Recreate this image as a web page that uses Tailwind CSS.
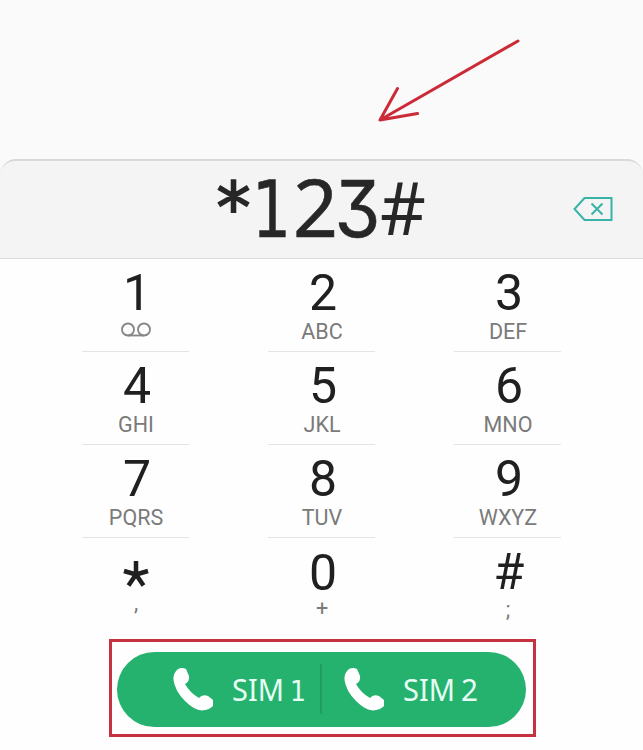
<!DOCTYPE html>
<html lang="en">
<head>
<meta charset="utf-8">
<title>Dialer</title>
<script src="https://cdn.jsdelivr.net/npm/@tailwindcss/browser@4"></script>
</head>
<body class="bg-[#fefefe]">
<main class="relative flex h-[750px] w-[643px] flex-col overflow-hidden bg-[#fefefe] font-['Roboto',sans-serif] text-[#202020]">
  <div class="bg-[#fafafa] pt-[159px]">
    <header class="flex h-[100px] items-center rounded-t-[16px] border-t-2 border-b border-t-[#d9d9d9] border-b-[#dcdcdc] bg-[#f4f4f4]">
      <svg class="ml-[210px] h-[97px] w-[220px] overflow-visible" viewBox="210 161 220 97" fill="#272727" stroke="#272727" stroke-width="0.6" aria-label="*123#">
        <text x="216.500" y="232" font-family="DejaVu Sans, sans-serif" font-size="70" stroke-width="1.800" textLength="34" lengthAdjust="spacingAndGlyphs">*</text>
        <text x="252" y="237" font-family="DejaVu Sans, sans-serif" font-size="79" textLength="39" lengthAdjust="spacingAndGlyphs">1</text>
        <text x="293" y="237" font-family="Noto Sans, sans-serif" font-size="80" textLength="45" lengthAdjust="spacingAndGlyphs">2</text>
        <text x="334.500" y="237" font-family="Inter, sans-serif" font-size="79" textLength="46" lengthAdjust="spacingAndGlyphs" style="font-feature-settings:'cv09' 1">3</text>
        <text x="380" y="235" font-family="Noto Sans, sans-serif" font-size="73" stroke="none" textLength="46" lengthAdjust="spacingAndGlyphs">#</text>
      </svg>
      <svg class="-mt-[2px] ml-[142px] h-[26px] w-[42px]" viewBox="0 0 42 26" fill="none" stroke="#38b3a7" stroke-width="2">
        <path d="M12.500 2H39.500V24H12.500L2.500 13Z"/><path d="M19.500 7.500 30.500 18.500M30.500 7.500 19.500 18.500"/>
      </svg>
    </header>
  </div>

  <section class="grid grid-cols-[107px_107px_107px] gap-x-[79px] pl-[82px] text-center [&>div]:flex [&>div]:h-[93px] [&>div]:flex-col [&>div]:items-center [&_b]:mt-[5px] [&_b]:h-[58px] [&_b]:pl-[3px] [&_b]:text-[50px] [&_b]:leading-[58px] [&_b]:font-normal [&_small]:pl-px [&_small]:text-[21.5px] [&_small]:leading-[20px] [&_small]:text-[#7a7a7a]">
    <div class="border-b border-[#e4e4e4]"><b>1</b>
      <svg class="h-[16px] w-[32px]" viewBox="0 0 32 16" fill="none" stroke="#858585" stroke-width="1.800"><circle cx="8" cy="7.500" r="6"/><circle cx="24" cy="7.500" r="6"/><path d="M8 13.500H24"/></svg>
    </div>
    <div class="border-b border-[#e4e4e4]"><b>2</b><small>ABC</small></div>
    <div class="border-b border-[#e4e4e4]"><b>3</b><small>DEF</small></div>
    <div class="border-b border-[#e4e4e4]"><b>4</b><small>GHI</small></div>
    <div class="border-b border-[#e4e4e4]"><b>5</b><small>JKL</small></div>
    <div class="border-b border-[#e4e4e4]"><b>6</b><small>MNO</small></div>
    <div class="border-b border-[#e4e4e4]"><b>7</b><small>PQRS</small></div>
    <div class="border-b border-[#e4e4e4]"><b>8</b><small>TUV</small></div>
    <div class="border-b border-[#e4e4e4]"><b>9</b><small>WXYZ</small></div>
    <div><b><svg class="mt-[17px] h-[30px] w-[30px]" viewBox="0 0 30 30" aria-label="*"><path d="M14 1V14.500M14 14.500 2 11M14 14.500 26 11M14 14.500 6.500 25.500M14 14.500 21.500 25.500" stroke="#202020" stroke-width="4.500" fill="none"/></svg></b><small class="-mt-[8px]">,</small></div>
    <div><b class="pt-px">0</b><small class="-mt-[2px]">+</small></div>
    <div><b>#</b><small class="-mt-px">;</small></div>
  </section>

  <footer class="mt-[8px] ml-[109px] flex h-[98px] w-[427px] shrink-0 items-center border-[3px] border-[#c4333f] pl-[5px]">
    <div class="mt-[2px] flex h-[75px] w-[409px] items-center rounded-full bg-[#25b26f]">
      <svg class="ml-[56px] h-[44px] w-[42px]" viewBox="0 0 42 44" fill="#fff"><path d="M5 2Q9 0 13 2L16 9Q17 14 12 17Q17 26 26 31Q29 27 35 29L40 33V39Q36 43 29 43.500Q21 43 12 34Q2 24 0.500 13Q0 6 5 2Z"/></svg>
      <svg class="ml-[17px] h-[40px] w-[78px]" viewBox="0 0 78 40" fill="#e8fff4" font-family="Noto Sans, sans-serif" font-size="30"><text x="0" y="31.500" textLength="52" lengthAdjust="spacingAndGlyphs">SIM</text><text x="58" y="31.500" font-family="DejaVu Sans, sans-serif" font-size="29" textLength="16" lengthAdjust="spacingAndGlyphs">1</text></svg>
      <span class="ml-[10px] h-[50px] w-[2px] bg-[#209d61]"></span>
      <svg class="ml-[22px] h-[44px] w-[42px]" viewBox="0 0 42 44" fill="#fff"><path d="M5 2Q9 0 13 2L16 9Q17 14 12 17Q17 26 26 31Q29 27 35 29L40 33V39Q36 43 29 43.500Q21 43 12 34Q2 24 0.500 13Q0 6 5 2Z"/></svg>
      <svg class="ml-[17px] h-[40px] w-[78px]" viewBox="0 0 78 40" fill="#e8fff4" font-family="Noto Sans, sans-serif" font-size="30"><text x="0" y="31.500" textLength="52" lengthAdjust="spacingAndGlyphs">SIM</text><text x="58" y="31.500" textLength="17" lengthAdjust="spacingAndGlyphs">2</text></svg>
    </div>
  </footer>

  <svg class="absolute top-[30px] left-[370px] h-[100px] w-[160px]" viewBox="370 30 160 100" fill="none" stroke="#cb2a37" stroke-width="3" stroke-linecap="round" stroke-linejoin="round"><path d="M518 41 380 120M397.500 88.500 380 120 417.500 113.500"/></svg>
</main>
</body>
</html>
